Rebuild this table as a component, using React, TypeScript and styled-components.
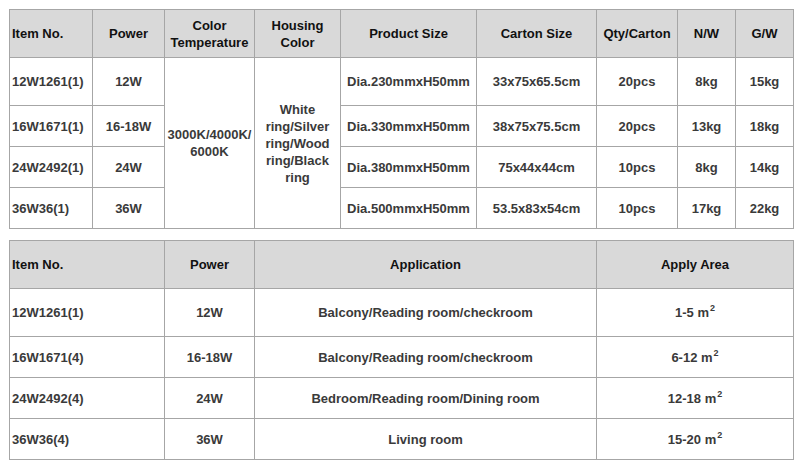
import React from "react";
import styled, { createGlobalStyle } from "styled-components";

const Global = createGlobalStyle`
  html, body { margin: 0; padding: 0; background: #ffffff; }
  body { font-family: "Liberation Sans", Arial, sans-serif; }
`;

const Page = styled.div`
  display: flex;
  flex-direction: column;
  gap: 11px;
  padding: 9px 0 0 9px;
`;

const Table = styled.table`
  border-collapse: separate;
  border-spacing: 0;
  table-layout: fixed;
  width: 785px;
  border-top: 1px solid #a6a6a6;
  border-left: 1px solid #a6a6a6;
  font-family: "Liberation Sans", Arial, sans-serif;
  font-size: 13px;
  font-weight: bold;
  line-height: 17px;
`;

const Col = styled.col<{ $w: number }>`
  width: ${(p) => p.$w}px;
`;

const Row = styled.tr<{ $h: number }>`
  height: ${(p) => p.$h}px;
`;

const Head = styled.th<{ $left?: boolean }>`
  box-sizing: border-box;
  background: #d9d9d9;
  color: #111111;
  font-weight: bold;
  text-align: ${(p) => (p.$left ? "left" : "center")};
  vertical-align: middle;
  padding: 0 2px;
  border-right: 1px solid #a6a6a6;
  border-bottom: 1px solid #a6a6a6;
`;

const Cell = styled.td<{ $left?: boolean }>`
  box-sizing: border-box;
  background: #ffffff;
  color: #3a3a3a;
  text-align: ${(p) => (p.$left ? "left" : "center")};
  vertical-align: middle;
  padding: 0 2px;
  border-right: 1px solid #a6a6a6;
  border-bottom: 1px solid #a6a6a6;
  white-space: nowrap;
`;

const Sup = styled.sup`
  font-size: 9px;
  line-height: 0;
  vertical-align: 6px;
  margin-left: 1px;
`;

const specRows = [
  { item: "12W1261(1)", power: "12W", size: "Dia.230mmxH50mm", carton: "33x75x65.5cm", qty: "20pcs", nw: "8kg", gw: "15kg", h: 48 },
  { item: "16W1671(1)", power: "16-18W", size: "Dia.330mmxH50mm", carton: "38x75x75.5cm", qty: "20pcs", nw: "13kg", gw: "18kg", h: 41 },
  { item: "24W2492(1)", power: "24W", size: "Dia.380mmxH50mm", carton: "75x44x44cm", qty: "10pcs", nw: "8kg", gw: "14kg", h: 41 },
  { item: "36W36(1)", power: "36W", size: "Dia.500mmxH50mm", carton: "53.5x83x54cm", qty: "10pcs", nw: "17kg", gw: "22kg", h: 41 },
];

const appRows = [
  { item: "12W1261(1)", power: "12W", app: "Balcony/Reading room/checkroom", area: "1-5", h: 48 },
  { item: "16W1671(4)", power: "16-18W", app: "Balcony/Reading room/checkroom", area: "6-12", h: 41 },
  { item: "24W2492(4)", power: "24W", app: "Bedroom/Reading room/Dining room", area: "12-18", h: 41 },
  { item: "36W36(4)", power: "36W", app: "Living room", area: "15-20", h: 41 },
];

const specCols = [83, 72, 90, 86, 136, 120, 81, 58, 58];
const appCols = [155, 90, 342, 197];

export default function App() {
  return (
    <>
      <Global />
      <Page>
        <Table>
          <colgroup>
            {specCols.map((w, i) => (
              <Col key={i} $w={w} />
            ))}
          </colgroup>
          <thead>
            <Row $h={48}>
              <Head $left>Item No.</Head>
              <Head>Power</Head>
              <Head>
                Color
                <br />
                Temperature
              </Head>
              <Head>
                Housing
                <br />
                Color
              </Head>
              <Head>Product Size</Head>
              <Head>Carton Size</Head>
              <Head>Qty/Carton</Head>
              <Head>N/W</Head>
              <Head>G/W</Head>
            </Row>
          </thead>
          <tbody>
            {specRows.map((r, i) => (
              <Row key={r.item} $h={r.h}>
                <Cell $left>{r.item}</Cell>
                <Cell>{r.power}</Cell>
                {i === 0 && (
                  <>
                    <Cell rowSpan={4}>
                      3000K/4000K/
                      <br />
                      6000K
                    </Cell>
                    <Cell rowSpan={4}>
                      White
                      <br />
                      ring/Silver
                      <br />
                      ring/Wood
                      <br />
                      ring/Black
                      <br />
                      ring
                    </Cell>
                  </>
                )}
                <Cell>{r.size}</Cell>
                <Cell>{r.carton}</Cell>
                <Cell>{r.qty}</Cell>
                <Cell>{r.nw}</Cell>
                <Cell>{r.gw}</Cell>
              </Row>
            ))}
          </tbody>
        </Table>

        <Table>
          <colgroup>
            {appCols.map((w, i) => (
              <Col key={i} $w={w} />
            ))}
          </colgroup>
          <thead>
            <Row $h={48}>
              <Head $left>Item No.</Head>
              <Head>Power</Head>
              <Head>Application</Head>
              <Head>Apply Area</Head>
            </Row>
          </thead>
          <tbody>
            {appRows.map((r) => (
              <Row key={r.item} $h={r.h}>
                <Cell $left>{r.item}</Cell>
                <Cell>{r.power}</Cell>
                <Cell>{r.app}</Cell>
                <Cell>
                  {r.area} m<Sup>2</Sup>
                </Cell>
              </Row>
            ))}
          </tbody>
        </Table>
      </Page>
    </>
  );
}
